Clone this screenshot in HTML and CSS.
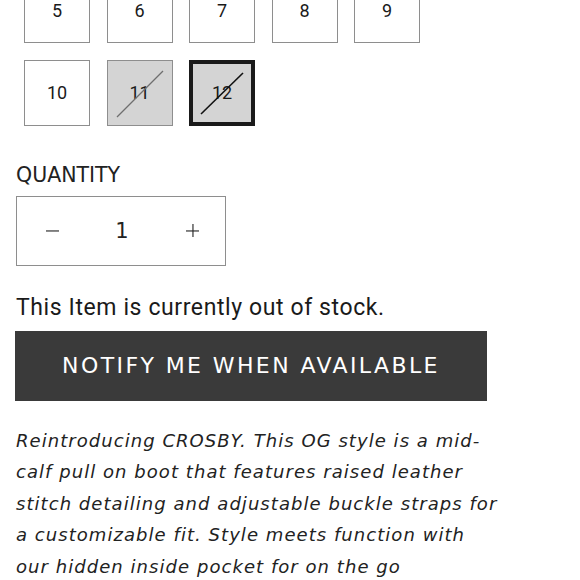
FILE: index.html
```html
<!DOCTYPE html>
<html lang="en">
<head>
  <meta charset="UTF-8" />
  <meta name="viewport" content="width=device-width, initial-scale=1.0" />
  <title>Crosby Boot</title>
  <link rel="stylesheet" href="styles.css">
</head>
<body>
  <div class="product-info">
    <fieldset class="size-picker">
      <div class="size-option">5</div>
      <div class="size-option">6</div>
      <div class="size-option">7</div>
      <div class="size-option">8</div>
      <div class="size-option">9</div>
      <div class="size-option">10</div>
      <div class="size-option sold-out">11
        <svg class="strike" viewBox="0 0 64 64"><line x1="9" y1="56" x2="55" y2="10" /></svg>
      </div>
      <div class="size-option sold-out selected">12
        <svg class="strike" viewBox="0 0 58 58"><line x1="8" y1="50" x2="50" y2="9" /></svg>
      </div>
    </fieldset>

    <div class="quantity-group">
      <label class="quantity-label" for="qty">QUANTITY</label>
      <div class="quantity">
        <button class="qty-btn" type="button" aria-label="Decrease">
          <svg viewBox="0 0 14 14"><line x1="0" y1="7.5" x2="14" y2="7.5" /></svg>
        </button>
        <input class="qty-input" id="qty" type="text" value="1" />
        <button class="qty-btn" type="button" aria-label="Increase">
          <svg viewBox="0 0 14 14"><line x1="0" y1="7.5" x2="14" y2="7.5" /><line x1="7.5" y1="0" x2="7.5" y2="14" /></svg>
        </button>
      </div>
    </div>

    <p class="stock-note">This Item is currently out of stock.</p>
    <button class="notify-btn" type="button">NOTIFY ME WHEN AVAILABLE</button>

    <p class="description">Reintroducing CROSBY. This OG style is a mid-calf pull on boot that features raised leather stitch detailing and adjustable buckle straps for a customizable fit. Style meets function with our hidden inside pocket for on the go</p>
  </div>
</body>
</html>
```

FILE: styles.css
```css
body {
  margin: 0;
  background-color: #fff;
  color: #1c1c1c;
  overflow: hidden;
}

.product-info {
  padding: 0 16px 0 16px;
}

/* size swatches */
.size-picker {
  border: none;
  margin: -23px 0 0 0;
  padding: 0 0 0 8px;
  display: grid;
  grid-template-columns: repeat(5, 66px);
  column-gap: 16.5px;
  row-gap: 16.5px;
}

.size-option {
  position: relative;
  height: 66px;
  box-sizing: border-box;
  border: 1px solid #8e8e8e;
  display: flex;
  justify-content: center;
  align-items: center;
  font-family: Roboto, "Liberation Sans", sans-serif;
  font-size: 18px;
  color: #1a1a1a;
}

.size-option.sold-out {
  background-color: #d4d4d4;
}

.size-option.selected {
  border: 4px solid #1a1a1a;
}

.strike {
  position: absolute;
  top: 0;
  left: 0;
  width: 100%;
  height: 100%;
}

.strike line {
  stroke: #6e6e6e;
  stroke-width: 1.2;
}

.selected .strike line {
  stroke: #111;
  stroke-width: 1.6;
}

/* quantity */
.quantity-group {
  margin-top: 36px;
}

.quantity-label {
  display: block;
  font-family: "DejaVu Sans", sans-serif;
  font-size: 20.5px;
  line-height: 26px;
  color: #222;
  margin-bottom: 8px;
}

.quantity {
  display: grid;
  grid-template-columns: repeat(3, 70px);
  width: 210px;
  height: 70px;
  box-sizing: border-box;
  border: 1px solid #8e8e8e;
}

.qty-btn {
  border: none;
  background: none;
  padding: 0;
  display: flex;
  justify-content: center;
  align-items: center;
  cursor: pointer;
}

.qty-btn svg {
  width: 13px;
  height: 13px;
}

.qty-btn line {
  stroke: #222;
  stroke-width: 1.2;
}

.qty-input {
  border: none;
  width: 100%;
  padding: 0;
  text-align: center;
  font-family: "DejaVu Sans", sans-serif;
  font-size: 21px;
  color: #222;
  background: none;
}

/* stock + notify */
.stock-note {
  margin: 28px 0 0 0;
  font-family: Roboto, "Liberation Sans", sans-serif;
  font-size: 23px;
  letter-spacing: 0.6px;
  line-height: 28px;
  color: #1a1a1a;
}

.notify-btn {
  display: block;
  margin: 9px 0 0 -1px;
  width: 472px;
  height: 70px;
  border: none;
  background-color: #3a3a3a;
  color: #fff;
  font-family: "DejaVu Sans", sans-serif;
  font-size: 22px;
  letter-spacing: 2.4px;
  cursor: pointer;
}

.description {
  margin: 24px 0 0 0;
  width: 488px;
  font-family: "DejaVu Sans", sans-serif;
  font-style: italic;
  font-size: 18px;
  letter-spacing: 1.05px;
  line-height: 31.5px;
  color: #222;
}
```
